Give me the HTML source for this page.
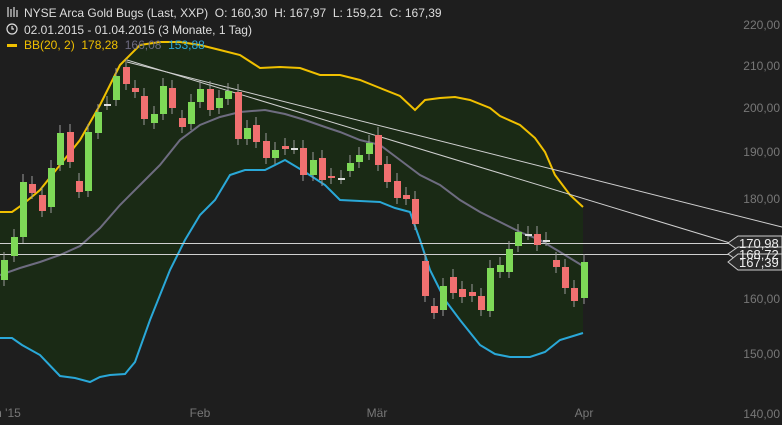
<!DOCTYPE html><html><head><style>
body{margin:0;background:#1e1e1e;width:782px;height:425px;overflow:hidden;font-family:"Liberation Sans",sans-serif}
svg{position:absolute;left:0;top:0}
text{font-family:"Liberation Sans",sans-serif;font-size:12px;white-space:pre}
</style></head><body>
<svg width="782" height="425" viewBox="0 0 782 425">
<rect width="782" height="425" fill="#1e1e1e"/>
<path fill="#1a2a15" d="M0,212 L12,212 22,205 40,190 60,165 80,140 100,105 120,65 140,45 160,42 180,42 200,45 220,50 240,55 260,68 280,67 300,68 320,75 340,75 360,80 380,88 400,96 415,110 425,100 440,98 455,97 470,100 490,108 500,116 520,125 535,138 545,152 555,175 570,195 583,207 L583,333 570,337 560,340 545,352 530,357 510,357 495,354 480,345 460,320 445,300 430,270 420,240 410,212 395,208 380,202 360,201 340,200 325,185 305,172 285,160 265,170 245,170 230,175 215,200 200,215 185,240 170,270 150,320 135,362 125,374 110,375 100,377 90,382 75,378 60,376 40,355 22,345 12,338 0,338Z"/>
<polyline fill="none" stroke="#f0c000" stroke-width="2" points="0,212 12,212 22,205 40,190 60,165 80,140 100,105 120,65 140,45 160,42 180,42 200,45 220,50 240,55 260,68 280,67 300,68 320,75 340,75 360,80 380,88 400,96 415,110 425,100 440,98 455,97 470,100 490,108 500,116 520,125 535,138 545,152 555,175 570,195 583,207"/>
<polyline fill="none" stroke="#2aa8d8" stroke-width="2" points="0,338 12,338 22,345 40,355 60,376 75,378 90,382 100,377 110,375 125,374 135,362 150,320 170,270 185,240 200,215 215,200 230,175 245,170 265,170 285,160 305,172 325,185 340,200 360,201 380,202 395,208 410,212 420,240 430,270 445,300 460,320 480,345 495,354 510,357 530,357 545,352 560,340 570,337 583,333"/>
<polyline fill="none" stroke="#6e6c80" stroke-width="2" points="0,275 20,268 40,262 60,255 80,246 100,228 120,205 140,185 160,165 180,140 200,125 220,117 240,112 265,110 285,114 305,120 325,127 340,132 360,140 380,145 400,160 420,175 440,185 460,200 480,212 500,222 520,232 540,240 560,252 583,266"/>
<g stroke="#d0d0d0" stroke-width="1">
<line x1="127" y1="60" x2="730" y2="243"/>
<line x1="127" y1="62" x2="782" y2="227"/>
<line x1="0" y1="243.5" x2="730" y2="243.5"/>
<line x1="0" y1="254.5" x2="730" y2="254.5"/>
</g>
<g id="c"></g>
<g font-size="12" fill="#777" text-anchor="end">
<text x="780" y="29">220,00</text><text x="780" y="70">210,00</text><text x="780" y="112">200,00</text><text x="780" y="156">190,00</text><text x="780" y="203">180,00</text><text x="780" y="303">160,00</text><text x="780" y="358">150,00</text><text x="780" y="418">140,00</text>
</g>
<g fill="#777" text-anchor="middle"><text x="8" y="417">n '15</text><text x="200" y="417">Feb</text><text x="377" y="417">Mär</text><text x="584" y="417">Apr</text></g>
<g stroke="#ccc" fill="#2a2a2a">
<path d="M728,243 L738,236 L782,236 L782,250 L738,250Z"/>
<path d="M728,254 L738,247 L782,247 L782,261 L738,261Z"/>
<path d="M728,262 L738,254 L782,254 L782,270 L738,270Z"/>
</g>
<g fill="#eee" style="font-size:13px"><text x="739" y="248" style="font-size:13px">170,98</text><text x="739" y="259" style="font-size:13px">168,72</text><text x="739" y="267" style="font-size:13px">167,39</text></g>
<g font-size="12" fill="#ddd">
<text x="24" y="17">NYSE Arca Gold Bugs (Last, XXP)  O: 160,30  H: 167,97  L: 159,21  C: 167,39</text>
<text x="24" y="34">02.01.2015 - 01.04.2015 (3 Monate, 1 Tag)</text>
<text x="24" y="49" fill="#f0c000">BB(20, 2)  178,28  <tspan fill="#6e6c80">166,08</tspan>  <tspan fill="#2aa8d8">153,88</tspan></text>
</g>
<g stroke="#ddd" fill="none" stroke-width="1.2"><path d="M8,7v10M11,9v8M14,7v10M17,10v7"/><circle cx="12" cy="29" r="5"/><path d="M12,26v3h2"/></g>
<rect x="7" y="44" width="10" height="3" fill="#f0c000"/>
</svg>
<script>
var d=[[4,260,280,1],[14,237,256,1],[23,182,237,1],[32,184,193,0],[42,195,211,0],[51,168,207,1],[60,133,165,1],[70,132,162,0],[79,181,192,0],[88,132,191,1],[98,112,133,1],[107,104,104,2],[116,76,100,1],[126,67,84,0],[135,88,92,0],[144,96,119,0],[154,114,123,1],[163,86,114,1],[172,88,108,0],[182,118,127,0],[191,102,124,1],[200,89,102,1],[210,89,110,0],[219,98,108,1],[228,91,99,1],[238,92,139,0],[247,128,139,1],[256,125,142,0],[266,141,158,0],[275,150,158,1],[285,146,149,0],[294,148,148,2],[303,148,175,0],[313,160,175,1],[322,158,180,0],[331,176,178,0],[341,178,178,2],[350,163,171,1],[359,155,162,1],[369,143,154,1],[378,135,165,0],[387,164,182,0],[397,181,198,0],[406,195,199,0],[415,199,224,0],[425,261,296,0],[434,306,313,0],[443,286,310,1],[453,277,293,0],[462,289,297,0],[472,292,296,0],[481,296,310,0],[490,268,311,1],[500,265,272,1],[509,249,272,1],[518,232,246,1],[528,234,234,2],[537,234,245,0],[546,240,240,2],[556,260,267,0],[565,267,288,0],[574,288,301,0],[584,262,298,1]];
var s='',g=document.getElementById('c');
d.forEach(function(c){var col=c[3]==1?'#7ed957':c[3]==0?'#f07070':'#ddd';
s+='<line x1="'+c[0]+'" x2="'+c[0]+'" y1="'+(c[1]-8)+'" y2="'+(c[2]+6)+'" stroke="#999" stroke-width="1"/>';
s+='<rect x="'+(c[0]-3)+'" y="'+c[1]+'" width="7" height="'+Math.max(2,c[2]-c[1])+'" fill="'+col+'"/>';});
g.innerHTML=s;
</script>
</body></html>
